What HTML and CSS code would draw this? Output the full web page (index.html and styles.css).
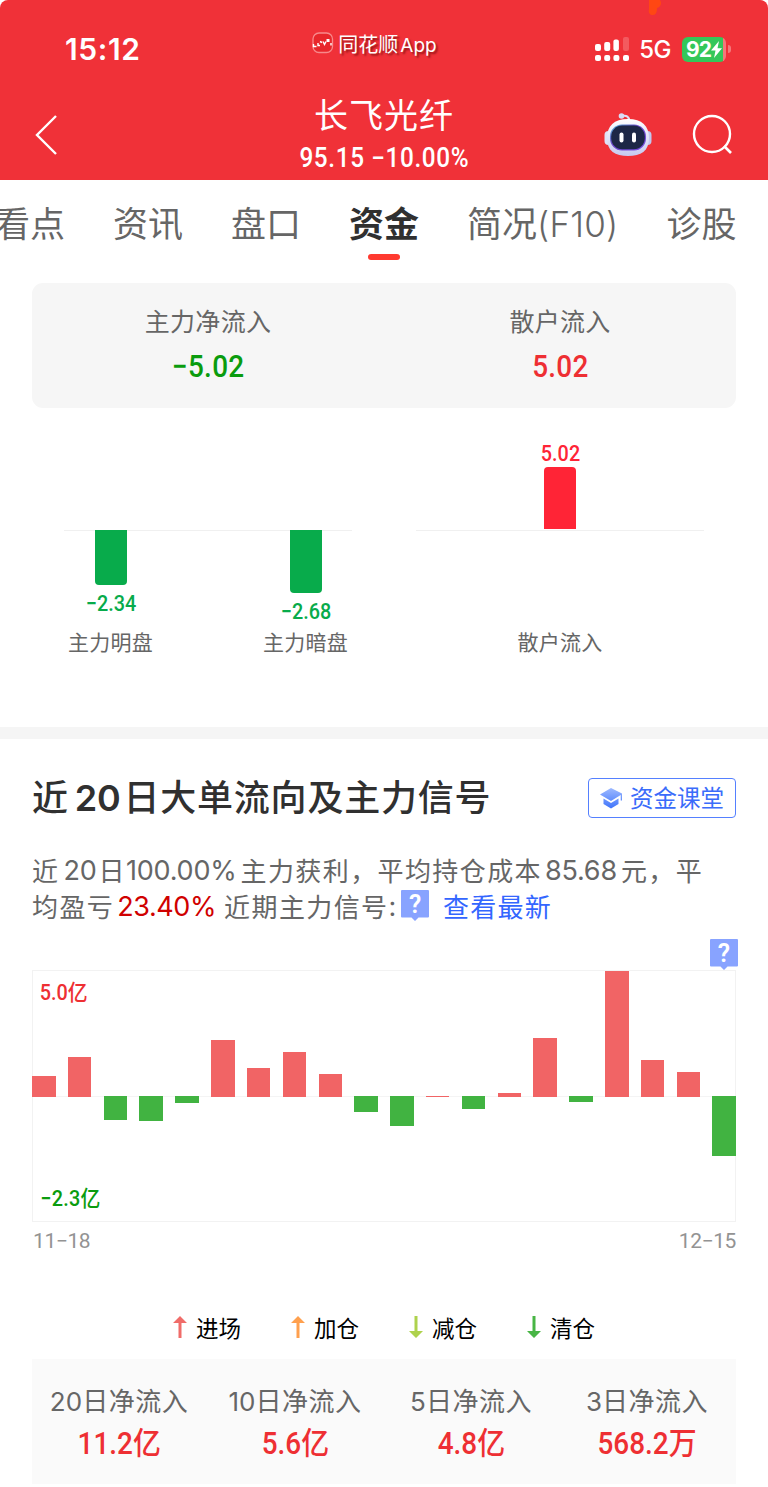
FILE: index.html
```html
<!DOCTYPE html>
<html lang="zh-CN">
<head>
	<meta charset="utf-8">
	<title>长飞光纤</title>
	<link rel="stylesheet" href="styles.css">
</head>
<body>
	<div class="header">
		<svg class="spot" width="14" height="16" viewBox="0 0 14 16"><path d="M1 0h11c2 3 1 7-3 8 0 4-1 7-4 7s-5-2-4-6z" fill="#ff4713"/></svg>
		<div class="status">
			<div class="time">15:12</div>
			<div class="from">
				<svg width="22" height="22" viewBox="0 0 22 22"><rect x="1" y="1" width="19.5" height="19.5" rx="6" fill="#e8262b" stroke="#f7898b" stroke-width="1.3"/><path d="M1.500 12v2.500h3M6 11v2.500h2M8 9.500l2 1M11 9.500l1.500 3 1.500-3M19 11v2.500" fill="none" stroke="#fff" stroke-width="1.4"/><path d="M14.500 7h3v3h-3z" fill="#fff"/></svg>
				<span>同花顺<b>App</b></span>
			</div>
			<div class="phone">
				<svg width="34" height="24" viewBox="0 0 34 24" fill="#fff"><rect x="0" y="7" width="6" height="7" rx="2"/><rect x="9.200" y="5" width="6" height="9" rx="2"/><rect x="18.400" y="2.500" width="5.500" height="11.500" rx="2"/><rect x="28" y="0" width="6" height="14" rx="2" opacity=".2"/><rect x="0" y="18" width="6" height="6" rx="2"/><rect x="9.200" y="18" width="6" height="6" rx="2"/><rect x="18.400" y="18" width="6" height="6" rx="2"/><rect x="28" y="18" width="6" height="6" rx="2"/></svg>
				<span class="net">5G</span>
				<div class="battery">
					<span>92</span>
					<svg width="11" height="17" viewBox="0 0 11 17"><path d="M8 0L0 9.500h4.500L3 17l8-9.700H6.500z" fill="#fff"/></svg>
				</div>
				<i class="tip"></i>
			</div>
		</div>
		<div class="nav">
			<svg class="back" width="24" height="42" viewBox="0 0 24 42"><path d="M22 2L3 21l19 19" fill="none" stroke="#fff" stroke-width="2.400"/></svg>
			<div class="stock">
				<h1>长飞光纤</h1>
				<p><span class="num">95.15 −10.00%</span></p>
			</div>
			<div class="tools">
				<svg width="48" height="46" viewBox="0 0 48 46">
					<defs>
						<linearGradient id="shell" x1="0" y1="0" x2="0" y2="1"><stop offset="0" stop-color="#fff"/><stop offset="1" stop-color="#c6c9f0"/></linearGradient>
						<linearGradient id="face" x1="0" y1="0" x2="1" y2="1"><stop offset="0" stop-color="#52bdd6"/><stop offset=".4" stop-color="#6a48c8"/><stop offset="1" stop-color="#7b4de0"/></linearGradient>
					</defs>
					<path d="M18 4c5-1 7 1 7.500 5" fill="none" stroke="#dfe0f6" stroke-width="2"/>
					<circle cx="17.500" cy="4" r="2.800" fill="#d9dcf5"/>
					<rect x="0.500" y="19" width="8" height="14" rx="4" fill="#dfe2f8"/>
					<rect x="39.500" y="19" width="8" height="14" rx="4" fill="#c3c6ee"/>
					<path d="M24 7C38 7 45 14 45 26c0 13-8 18-21 18S3 39 3 26C3 14 10 7 24 7z" fill="url(#shell)"/>
					<rect x="6" y="12.500" width="36" height="26" rx="12" fill="url(#face)"/>
					<rect x="7.200" y="13.500" width="33.600" height="23.800" rx="11" fill="#1d2746"/>
					<rect x="15.500" y="20.500" width="4" height="10" rx="2" fill="#fff"/>
					<rect x="28" y="20.500" width="4" height="10" rx="2" fill="#fff"/>
				</svg>
				<svg width="42" height="42" viewBox="0 0 42 42"><circle cx="20" cy="20" r="18" fill="none" stroke="#fff" stroke-width="2.400"/><path d="M32 32l7 7" stroke="#fff" stroke-width="2.600"/></svg>
			</div>
		</div>
	</div>

	<div class="tabs">
		<a>看点</a>
		<a>资讯</a>
		<a>盘口</a>
		<a class="current">资金</a>
		<a>简况<b>(F10)</b></a>
		<a>诊股</a>
	</div>

	<div class="summary">
		<div>
			<p>主力净流入</p>
			<strong class="num green">−5.02</strong>
		</div>
		<div>
			<p>散户流入</p>
			<strong class="num red">5.02</strong>
		</div>
	</div>

	<div class="flow">
		<div class="group two">
			<div class="col">
				<div class="upper"></div>
				<div class="lower"><i style="height: 55px"></i><span class="num">−2.34</span></div>
				<p>主力明盘</p>
			</div>
			<div class="col">
				<div class="upper"></div>
				<div class="lower"><i style="height: 63px"></i><span class="num">−2.68</span></div>
				<p>主力暗盘</p>
			</div>
		</div>
		<div class="group">
			<div class="col">
				<div class="upper"><span class="num">5.02</span><i style="height: 62px"></i></div>
				<div class="lower"></div>
				<p>散户流入</p>
			</div>
		</div>
	</div>

	<div class="signal">
		<div class="title">
			<h2>近<b>20</b>日大单流向及主力信号</h2>
			<a class="lesson">
				<svg width="22" height="21" viewBox="0 0 22 21"><defs><linearGradient id="cap" x1="0" y1="0" x2="0" y2="1"><stop offset="0" stop-color="#9db9ff"/><stop offset="1" stop-color="#3f74fb"/></linearGradient></defs><path d="M11 0l11 5.500v7h-1.300V7L11 13 0 6.500zM3.500 10.500L11 15l7.500-4.500v5.500L11 20.500 3.500 16z" fill="url(#cap)"/></svg>
				<span>资金课堂</span>
			</a>
		</div>
		<div class="desc">
			<p>近<b class="gap">20</b>日<b class="full">100.00%</b>主力获利，平均持仓成本<b class="cost">85.68</b>元，平</p>
			<p>均盈亏<b class="rate">23.40%</b>近期主力信号<b>:</b><i class="help"><svg width="28" height="31" viewBox="0 0 28 31"><path d="M1 0h26q1 0 1 1v25.500q0 1-1 1h-9.500L14 31l-3.500-3.500H1q-1 0-1-1V1q0-1 1-1z" fill="#88a3ff"/></svg><b>?</b></i><a>查看最新</a></p>
		</div>

		<div class="chart">
			<div class="bars">
				<i class="up" style="height: 21px"></i>
				<i class="up" style="height: 40px"></i>
				<i class="down" style="height: 24px"></i>
				<i class="down" style="height: 25px"></i>
				<i class="down" style="height: 7px"></i>
				<i class="up" style="height: 57px"></i>
				<i class="up" style="height: 29px"></i>
				<i class="up" style="height: 45px"></i>
				<i class="up" style="height: 23px"></i>
				<i class="down" style="height: 16px"></i>
				<i class="down" style="height: 30px"></i>
				<i class="up" style="height: 1px"></i>
				<i class="down" style="height: 13px"></i>
				<i class="up" style="height: 4px"></i>
				<i class="up" style="height: 59px"></i>
				<i class="down" style="height: 6px"></i>
				<i class="up" style="height: 126px"></i>
				<i class="up" style="height: 37px"></i>
				<i class="up" style="height: 25px"></i>
				<i class="down" style="height: 60px"></i>
			</div>
			<span class="max"><span class="num">5.0亿</span></span>
			<span class="min"><span class="num">−2.3亿</span></span>
			<i class="help"><svg width="28" height="31" viewBox="0 0 28 31"><path d="M1 0h26q1 0 1 1v25.500q0 1-1 1h-9.500L14 31l-3.500-3.500H1q-1 0-1-1V1q0-1 1-1z" fill="#88a3ff"/></svg><b>?</b></i>
		</div>
		<div class="dates">
			<span>11−18</span>
			<span>12−15</span>
		</div>

		<div class="legend">
			<span><svg width="14" height="22" viewBox="0 0 14 22"><path d="M7 0l7 7H8.500v15h-3V7H0z" fill="#f06c69"/></svg>进场</span>
			<span><svg width="14" height="22" viewBox="0 0 14 22"><path d="M7 0l7 7H8.500v15h-3V7H0z" fill="#ffa04e"/></svg>加仓</span>
			<span><svg width="14" height="22" viewBox="0 0 14 22"><path d="M7 22l7-7H8.500V0h-3v15H0z" fill="#aed24d"/></svg>减仓</span>
			<span><svg width="14" height="22" viewBox="0 0 14 22"><path d="M7 22l7-7H8.500V0h-3v15H0z" fill="#48b545"/></svg>清仓</span>
		</div>

		<div class="total">
			<div><p><b>20</b>日净流入</p><strong class="num">11.2亿</strong></div>
			<div><p><b>10</b>日净流入</p><strong class="num">5.6亿</strong></div>
			<div><p><b>5</b>日净流入</p><strong class="num">4.8亿</strong></div>
			<div><p><b>3</b>日净流入</p><strong class="num">568.2万</strong></div>
		</div>
	</div>
</body>
</html>
```
FILE: styles.css
```css
* {
	margin: 0;
	padding: 0;
	box-sizing: border-box;
}
body {
	width: 768px;
	height: 1487px;
	overflow: hidden;
	background-color: #fff;
	color: #666;
	font-family: "Noto Sans CJK SC", sans-serif;
}
i {
	font-style: normal;
}
b {
	font-family: Inter, sans-serif;
	font-weight: inherit;
}
svg {
	display: block;
	flex: none;
}
.num {
	display: inline-block;
	font-family: Roboto, "Noto Sans CJK SC", sans-serif;
	font-weight: 500;
	white-space: nowrap;
	transform: scaleX(.9);
}
.green {
	color: #0a9c0e;
}
.red {
	color: #ee2f33;
}

/* header */
.header {
	position: relative;
	height: 180px;
	background-color: #f03138;
	border-radius: 8px 8px 0 0;
	color: #fff;
}
.spot {
	position: absolute;
	left: 648px;
	top: 0;
}
.status {
	display: grid;
	grid-template-columns: 1fr auto 1fr;
	height: 94px;
	padding: 0 37px 0 65px;
}
.time {
	padding-top: 31px;
	font: 600 30px/36px Inter, sans-serif;
	letter-spacing: .6px;
}
.from {
	display: flex;
	padding-top: 32px;
	margin-left: -47px;
	gap: 4px;
	height: 56px;
	font-size: 20px;
	line-height: 24px;
	text-shadow: 2px 2px 2px rgba(90, 0, 0, .6);
}
.from b {
	margin-left: 2px;
	font-size: 19px;
}
.phone {
	display: flex;
	justify-content: flex-end;
	align-items: center;
	height: 26px;
	margin-top: 36px;
}
.net {
	margin: 2px 11px 0 10px;
	font: 500 24px/26px Inter, sans-serif;
	letter-spacing: -.5px;
}
.battery {
	display: flex;
	align-items: center;
	justify-content: center;
	width: 44px;
	height: 25px;
	border-radius: 6px;
	background: linear-gradient(90deg, #34c759 41px, #f5777b 41px);
}
.battery span {
	font: 700 21px/25px Inter, sans-serif;
	letter-spacing: -1px;
}
.tip {
	width: 3px;
	height: 8px;
	margin-left: 2px;
	border-radius: 0 4px 4px 0;
	background-color: #f5777b;
}
.nav {
	display: grid;
	grid-template-columns: 1fr auto 1fr;
	padding: 0 34px;
}
.back {
	margin-top: 20px;
}
.stock {
	text-align: center;
}
.stock h1 {
	font-size: 34px;
	line-height: 40px;
	font-weight: 400;
	letter-spacing: 1px;
}
.stock p {
	height: 40px;
	font-size: 27px;
	letter-spacing: .700px;
	line-height: 43px;
}
.tools {
	display: flex;
	justify-content: flex-end;
	gap: 40px;
	padding-top: 18px;
}
.tools svg:last-child {
	margin-top: 2px;
}

/* tabs */
.tabs {
	display: flex;
	gap: 48px;
	height: 103px;
	padding-top: 19px;
	margin-left: -5px;
	font-size: 35px;
	line-height: 46px;
	white-space: nowrap;
}
.tabs b {
	font-size: 35px;
	font-weight: 300;
	letter-spacing: .200px;
}
.tabs .current {
	color: #303030;
	font-weight: 700;
}
.current::after {
	content: "";
	display: block;
	width: 32px;
	height: 6px;
	margin: 9px auto 0;
	border-radius: 3px;
	background-color: #ff3a30;
}

.summary {
	display: flex;
	height: 125px;
	margin: 0 32px;
	padding-top: 18px;
	border-radius: 11px;
	background-color: #f6f6f6;
	text-align: center;
}
.summary div {
	flex: 1;
}
.summary p {
	font-size: 25px;
	letter-spacing: .300px;
	line-height: 38px;
}
.summary strong {
	font-size: 31px;
	letter-spacing: .300px;
	line-height: 56px;
}

/* today */
.flow {
	display: flex;
	gap: 64px;
	height: 319px;
	padding: 22px 63px 0 64px;
}
.group {
	display: flex;
	justify-content: center;
	width: 288px;
	height: 101px;
	border-bottom: 1px solid #f0f0f0;
}
.group.two {
	justify-content: space-between;
	padding: 0 4px;
}
.col {
	width: 85px;
	text-align: center;
	font-size: 21px;
}
.col i {
	display: block;
	width: 32px;
	margin: 0 auto;
}
.col .num {
	font-size: 22px;
	line-height: 26px;
	transform: scaleX(.9);
}
.upper {
	display: flex;
	flex-direction: column;
	justify-content: flex-end;
	height: 99px;
	color: #ff2436;
}
.upper i {
	border-radius: 4px 4px 0 0;
	background-color: #ff2436;
}
.lower {
	height: 97px;
	padding-top: 1px;
	color: #08ab4b;
}
.lower i {
	border-radius: 0 0 4px 4px;
	background-color: #08ab4b;
}
.lower .num {
	margin-top: 6px;
}
.col p {
	line-height: 30px;
	letter-spacing: .200px;
	white-space: nowrap;
}

/* 20 days */
.signal {
	padding: 39px 32px 0;
	border-top: 12px solid #f5f5f5;
}
.title {
	display: flex;
	justify-content: space-between;
	height: 74px;
}
.title h2 {
	font-size: 36px;
	line-height: 34px;
	font-weight: 500;
	letter-spacing: .800px;
	color: #303030;
}
.title h2 b {
	margin: 0 3px 0 6px;
	font-weight: 600;
	letter-spacing: -.300px;
}
.lesson {
	display: flex;
	align-items: center;
	gap: 8px;
	width: 148px;
	height: 40px;
	padding-left: 11px;
	border: 1px solid #5580ff;
	border-radius: 4px;
	font-size: 23.500px;
	line-height: 34px;
	color: #3a6cfa;
}
.lesson span {
	padding-bottom: 2px;
}
.desc {
	font-size: 26px;
	letter-spacing: 1.400px;
	line-height: 36px;
	white-space: nowrap;
}
.desc p {
	display: flex;
	height: 36px;
}
.desc b {
	padding-top: 1px;
	font-size: 27px;
	letter-spacing: -.200px;
}
.gap {
	margin: 0 2px 0 4px;
}
.full {
	margin-right: 4px;
}
.cost {
	margin: 0 4px 0 3px;
}
.desc .rate {
	margin: 0 8px 0 3px;
	letter-spacing: -.400px;
	color: #d00000;
}
.desc a {
	margin-left: 14px;
	letter-spacing: 1.200px;
	color: #3366ff;
}
.help {
	position: relative;
	width: 28px;
	height: 31px;
	text-align: center;
}
.desc .help {
	margin: 2px 0 0 5px;
}
.help b, .desc .help b {
	position: absolute;
	left: 0;
	top: 0;
	width: 28px;
	padding: 0;
	font-family: Roboto, sans-serif;
	font-size: 25px;
	font-weight: 600;
	line-height: 29px;
	letter-spacing: 0;
	color: #fff;
}
.chart {
	position: relative;
	height: 252px;
	margin-top: 46px;
	border: 1px solid #f2f2f2;
	background: linear-gradient(#f4f4f4, #f4f4f4) 0 125px / 100% 1px no-repeat;
}
.bars {
	display: flex;
	justify-content: space-between;
	height: 252px;
	margin: -1px;
}
.bars i {
	width: 23.500px;
}
.up {
	align-self: flex-end;
	margin-bottom: 125px;
	background-color: #f16465;
}
.down {
	margin-top: 126px;
	background-color: #41b341;
}
.max, .min {
	position: absolute;
	left: 4px;
	font-size: 22px;
	line-height: 26px;
	color: #ee2f33;
}
.max {
	top: 6px;
}
.min {
	bottom: 9px;
	letter-spacing: .300px;
	color: #0a9c0e;
}
.chart .help {
	position: absolute;
	right: -3px;
	top: -32px;
}
.dates {
	display: flex;
	justify-content: space-between;
	padding: 1px 0 0 1px;
	font: 400 21px/36px Roboto, sans-serif;
	letter-spacing: -.400px;
	color: #939393;
}
.legend {
	display: flex;
	gap: 50px;
	height: 100px;
	padding: 51px 0 0 141px;
	font-size: 22.500px;
	line-height: 32px;
	color: #000;
}
.legend span {
	display: flex;
	align-items: center;
	gap: 9px;
	height: 34px;
}
.total {
	display: flex;
	height: 125px;
	padding-top: 21px;
	background-color: #fafafa;
	text-align: center;
}
.total div {
	width: 176px;
	padding-right: 2px;
}
.total p {
	font-size: 26px;
	line-height: 40px;
	letter-spacing: .500px;
}
.total b {
	letter-spacing: 0;
}
.total strong {
	font-size: 31px;
	line-height: 44px;
	color: #ee2f33;
}
```
